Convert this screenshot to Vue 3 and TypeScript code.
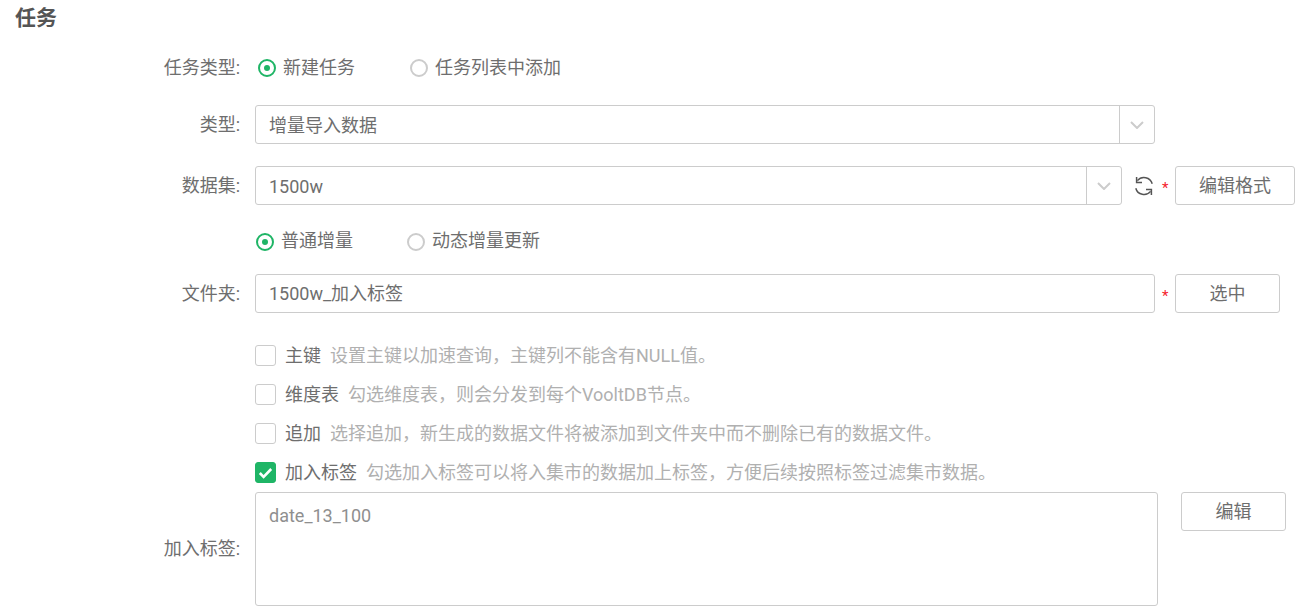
<script setup lang="ts">
interface Check { name: string; desc: string; checked: boolean }
const checks: Check[] = [
  { name: '主键', desc: '设置主键以加速查询，主键列不能含有NULL值。', checked: false },
  { name: '维度表', desc: '勾选维度表，则会分发到每个VooltDB节点。', checked: false },
  { name: '追加', desc: '选择追加，新生成的数据文件将被添加到文件夹中而不删除已有的数据文件。', checked: false },
  { name: '加入标签', desc: '勾选加入标签可以将入集市的数据加上标签，方便后续按照标签过滤集市数据。', checked: true },
]
</script>

<template>
  <div class="page">
    <h2 class="title">任务</h2>

    <div class="row row-type">
      <span class="label">任务类型:</span>
      <div class="radios radios-a">
        <label class="radio on"><i class="dot"></i>新建任务</label>
        <label class="radio"><i class="dot"></i>任务列表中添加</label>
      </div>
    </div>

    <div class="row row-kind">
      <span class="label">类型:</span>
      <div class="select w900">
        <span class="value">增量导入数据</span>
        <span class="arrow">
          <svg width="14" height="8" viewBox="0 0 14 8"><path d="M1 1l6 6 6-6" fill="none" stroke="#ccc" stroke-width="2" /></svg>
        </span>
      </div>
    </div>

    <div class="row row-set">
      <span class="label">数据集:</span>
      <div class="select w867">
        <span class="value">1500w</span>
        <span class="arrow">
          <svg width="14" height="8" viewBox="0 0 14 8"><path d="M1 1l6 6 6-6" fill="none" stroke="#ccc" stroke-width="2" /></svg>
        </span>
      </div>
      <svg class="refresh" width="20" height="20" viewBox="0 0 20 20" fill="none" stroke="#555" stroke-width="1.5">
        <path d="M18.2 7.8A8.5 8.5 0 0 0 3.4 4.6" />
        <path d="M1.8 12.2A8.5 8.5 0 0 0 16.6 15.4" />
        <path d="M2.6 1v5.4h5.4" />
        <path d="M17.4 19v-5.4h-5.4" />
      </svg>
      <span class="star">*</span>
      <button class="btn w120">编辑格式</button>
    </div>

    <div class="radios radios-b">
      <label class="radio on"><i class="dot"></i>普通增量</label>
      <label class="radio"><i class="dot"></i>动态增量更新</label>
    </div>

    <div class="row row-folder">
      <span class="label">文件夹:</span>
      <div class="input w900">1500w_加入标签</div>
      <span class="star">*</span>
      <button class="btn w105">选中</button>
    </div>

    <div class="checks">
      <div v-for="c in checks" :key="c.name" class="check">
        <span class="box" :class="{ checked: c.checked }">
          <svg v-if="c.checked" width="15" height="12" viewBox="0 0 15 12"><path d="M1.8 6l3.8 3.8L13.2 2" fill="none" stroke="#fff" stroke-width="2.6" /></svg>
        </span>
        <span class="name">{{ c.name }}</span>
        <span class="desc">{{ c.desc }}</span>
      </div>
    </div>

    <div class="row row-tags">
      <span class="label">加入标签:</span>
      <div class="textarea">date_13_100</div>
      <button class="btn w105 tag-btn">编辑</button>
    </div>
  </div>
</template>

<style>
html, body { margin: 0; background: #fff; overflow: hidden; }
</style>

<style scoped>
.page {
  width: 1306px;
  height: 614px;
  overflow: hidden;
  box-sizing: border-box;
  padding-top: 7px;
  font-family: Roboto, "Noto Sans CJK SC", sans-serif;
  font-size: 18px;
  color: #6e6e6e;
}
.title {
  margin: 0 0 0 15px;
  height: 22px;
  font-size: 21px;
  line-height: 22px;
  font-weight: 700;
  color: #555;
}
.row { display: flex; align-items: center; }
.label {
  flex: none;
  width: 240px;
  margin-right: 15px;
  text-align: right;
  color: #6e6e6e;
  line-height: 24px;
}
.row-type { height: 39px; margin-top: 19px; }
.row-kind { margin-top: 18px; }
.row-set { margin-top: 22px; }
.row-folder { margin-top: 21px; }
.row-tags { margin-top: 9px; align-items: flex-start; position: relative; }
.row-tags .label { align-self: center; }

.radios { display: flex; line-height: 24px; }
.radios-a { padding-left: 3px; gap: 55px; }
.radios-b { margin: 24px 0 0 256px; height: 24px; gap: 54px; }
.radio { display: flex; align-items: center; gap: 7px; }
.dot {
  flex: none;
  box-sizing: border-box;
  width: 18px;
  height: 18px;
  margin-top: 1px;
  border: 2px solid #ccc;
  border-radius: 50%;
  background: #fff;
  position: relative;
}
.radio.on .dot { border-color: #1fb566; }
.radio.on .dot::after {
  content: "";
  position: absolute;
  left: 4px;
  top: 4px;
  width: 6px;
  height: 6px;
  border-radius: 50%;
  background: #1fb566;
}

.select, .input, .textarea, .btn {
  box-sizing: border-box;
  border: 1px solid #ccc;
  border-radius: 3px;
  background: #fff;
}
.select { display: flex; height: 39px; flex: none; }
.w900 { width: 900px; }
.w867 { width: 867px; }
.value { flex: 1; padding: 1px 0 0 13px; line-height: 37px; }
.arrow {
  flex: none;
  box-sizing: border-box;
  width: 35px;
  border-left: 1px solid #ccc;
  display: flex;
  align-items: center;
  justify-content: center;
}
.input { height: 39px; flex: none; padding-left: 13px; line-height: 37px; }
.refresh { flex: none; margin: 0 1px 0 12px; }
.star {
  flex: none;
  width: 13px;
  margin-left: 7px;
  color: #f5222d;
  font-size: 15px;
  line-height: 14px;
  padding-top: 4px;
}
.btn {
  flex: none;
  height: 39px;
  padding: 0;
  font: inherit;
  color: #6e6e6e;
  line-height: 37px;
  text-align: center;
}
.w120 { width: 120px; }
.w105 { width: 105px; }

.checks { margin: 32px 0 0 255px; display: flex; flex-direction: column; gap: 18px; }
.check { display: flex; align-items: center; height: 21px; }
.box {
  flex: none;
  box-sizing: border-box;
  width: 21px;
  height: 21px;
  border: 1px solid #ccc;
  border-radius: 3px;
  margin-right: 9px;
  display: flex;
  align-items: center;
  justify-content: center;
}
.box.checked { background: #1fb566; border-color: #1fb566; }
.name { color: #6e6e6e; margin-right: 9px; padding-bottom: 3px; }
.desc { color: #b0b0b0; white-space: nowrap; padding-bottom: 3px; }

.textarea {
  flex: none;
  width: 903px;
  height: 114px;
  padding: 11px 13px;
  line-height: 24px;
  color: #8f8f8f;
}
.tag-btn { margin-left: 23px; }
</style>
